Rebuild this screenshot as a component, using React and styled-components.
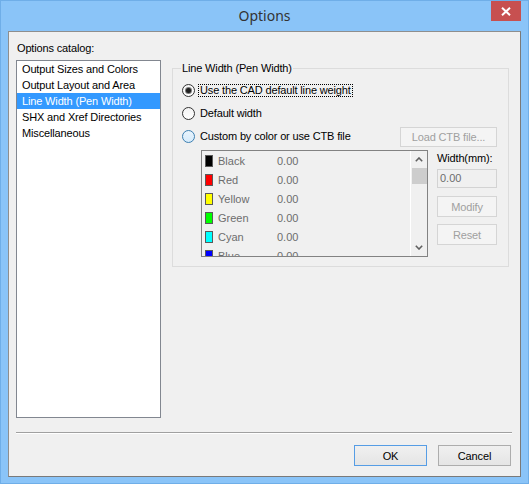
import React from "react";
import styled, { createGlobalStyle } from "styled-components";

const Global = createGlobalStyle`
  html, body { margin: 0; padding: 0; background: #ffffff; }
  body { font-family: "Liberation Sans", Arial, sans-serif; }
  * { box-sizing: border-box; }
`;

const Window = styled.div`
  width: 529px;
  height: 484px;
  background: #8ac4f8;
  border: 1px solid #6faee8;
  padding: 0 7px 6px 7px;
  display: flex;
  flex-direction: column;
`;

const TitleBar = styled.div`
  height: 30px;
  display: grid;
  grid-template-columns: 1fr auto 1fr;
  align-items: center;
`;

const Title = styled.div`
  grid-column: 2;
  font-family: "Noto Sans", "Open Sans", sans-serif;
  font-size: 14px;
  color: #333333;
  padding-bottom: 1px;
`;

const Close = styled.div`
  grid-column: 3;
  justify-self: end;
  align-self: start;
  width: 30px;
  height: 20px;
  background: #c75050;
  display: flex;
  align-items: center;
  justify-content: center;
`;

const Client = styled.div`
  flex: 1;
  background: #f0f0f0;
  border: 1px solid #7a7a7a;
  border-left-color: #8e8e8e;
  border-top-color: #8e8e8e;
  padding: 0 8px 0 7px;
  display: flex;
  flex-direction: column;
  font-size: 11px;
  color: #000;
  letter-spacing: -0.15px;
`;

const TopSection = styled.div`
  display: flex;
  align-items: flex-start;
`;

const LeftColumn = styled.div`
  width: 145px;
  display: flex;
  flex-direction: column;
`;

const Label = styled.div`
  line-height: 13px;
  padding-top: 10px;
  margin-bottom: 5px;
  padding-left: 1px;
`;

const ListBox = styled.div`
  height: 358px;
  background: #ffffff;
  border: 1px solid #828790;
  display: flex;
  flex-direction: column;
`;

const ListItem = styled.div`
  height: 16px;
  line-height: 16px;
  padding-left: 5px;
  white-space: nowrap;
  background: ${(p) => (p.$selected ? "#3399ff" : "transparent")};
  color: ${(p) => (p.$selected ? "#ffffff" : "#000000")};
`;

const RightColumn = styled.div`
  margin-left: 11px;
  padding-top: 30px;
  width: 337px;
`;

const GroupBox = styled.fieldset`
  margin: 0;
  min-width: 0;
  border: 1px solid #dcdcdc;
  padding: 4px 11px 9px 9px;
  display: flex;
  flex-direction: column;
`;

const Legend = styled.legend`
  padding: 0 1px;
  margin-left: -1px;
  line-height: 13px;
  font-size: 11px;
`;

const RadioRow = styled.div`
  height: 23px;
  display: flex;
  align-items: center;
  justify-content: space-between;
`;

const RadioWrap = styled.div`
  display: flex;
  align-items: center;
`;

const RadioCircle = styled.div`
  width: 13px;
  height: 13px;
  border-radius: 50%;
  border: 1px solid ${(p) => (p.$hover ? "#3c7fb1" : "#333333")};
  background: ${(p) =>
    p.$hover
      ? "linear-gradient(#e8f4fd, #d6ebfb)"
      : "linear-gradient(#f4f4f4, #ffffff)"};
  display: flex;
  align-items: center;
  justify-content: center;
`;

const RadioDot = styled.div`
  width: 5px;
  height: 5px;
  border-radius: 50%;
  background: #1f1f1f;
  box-shadow: 0 0 0 1px #7a7a7a;
`;

const RadioLabel = styled.span`
  margin-left: 3px;
  padding: 0 1px;
  line-height: 11px;
  border: 1px dotted ${(p) => (p.$focus ? "#000000" : "transparent")};
  white-space: nowrap;
`;

const Button = styled.div`
  width: ${(p) => p.$w}px;
  height: ${(p) => p.$h || 21}px;
  display: flex;
  align-items: center;
  justify-content: center;
  border: 1px solid
    ${(p) => (p.$disabled ? "#d5d5d5" : p.$default ? "#569de5" : "#adadad")};
  background: ${(p) =>
    p.$disabled ? "#f4f4f4" : "linear-gradient(#f0f0f0, #e5e5e5)"};
  color: ${(p) => (p.$disabled ? "#a0a0a0" : "#000000")};
  white-space: nowrap;
`;

const ColorArea = styled.div`
  margin-top: 2px;
  padding-left: 19px;
  display: flex;
  align-items: flex-start;
`;

const ColorList = styled.div`
  width: 227px;
  height: 107px;
  border: 1px solid #828282;
  display: flex;
  overflow: hidden;
`;

const ColorRows = styled.div`
  flex: 1;
  display: flex;
  flex-direction: column;
`;

const ColorRow = styled.div`
  height: 19px;
  flex-shrink: 0;
  display: flex;
  align-items: center;
  padding-left: 3px;
  color: #6d6d6d;
  font-size: 11px;
  letter-spacing: 0;
`;

const Swatch = styled.div`
  width: 8px;
  height: 12px;
  border: 1px solid #5a5a5a;
  background: ${(p) => p.$color};
`;

const ColorName = styled.span`
  width: 59px;
  margin-left: 5px;
`;

const ScrollBar = styled.div`
  width: 17px;
  border-left: 1px solid #ffffff;
  display: flex;
  flex-direction: column;
  align-items: center;
`;

const ScrollBtn = styled.div`
  height: 17px;
  width: 16px;
  display: flex;
  align-items: center;
  justify-content: center;
`;

const Thumb = styled.div`
  width: 15px;
  height: 16px;
  background: #cdcdcd;
`;

const Spacer = styled.div`
  flex: 1;
`;

const Controls = styled.div`
  width: 60px;
  margin-left: 9px;
  display: flex;
  flex-direction: column;
`;

const SmallLabel = styled.div`
  line-height: 14px;
  margin-top: 1px;
  white-space: nowrap;
`;

const Input = styled.div`
  margin-top: 4px;
  height: 19px;
  border: 1px solid #d3d3d3;
  background: #f0f0f0;
  color: #6d6d6d;
  padding-left: 2px;
  line-height: 17px;
  letter-spacing: 0;
`;

const Separator = styled.div`
  margin-top: 14px;
  border-top: 1px solid #a0a0a0;
  border-bottom: 1px solid #ffffff;
`;

const ButtonRow = styled.div`
  margin-top: 11px;
  padding-right: 1px;
  display: flex;
  justify-content: flex-end;
  gap: 11px;
`;

const Chevron = ({ up }) => (
  <svg width="8" height="5" viewBox="0 0 8 5">
    <path
      d={up ? "M0.8 4.2 L4 1 L7.2 4.2" : "M0.8 0.8 L4 4 L7.2 0.8"}
      fill="none"
      stroke="#606060"
      strokeWidth="1.6"
    />
  </svg>
);

const catalog = [
  "Output Sizes and Colors",
  "Output Layout and Area",
  "Line Width (Pen Width)",
  "SHX and Xref Directories",
  "Miscellaneous",
];

const colors = [
  ["Black", "#000000"],
  ["Red", "#ff0000"],
  ["Yellow", "#ffff00"],
  ["Green", "#00ff00"],
  ["Cyan", "#00ffff"],
  ["Blue", "#0000ff"],
];

export default function App() {
  return (
    <>
      <Global />
      <Window>
        <TitleBar>
          <Title>Options</Title>
          <Close>
            <svg width="10" height="9" viewBox="0 0 10 9">
              <path d="M1 0.8 L9 8.2 M9 0.8 L1 8.2" stroke="#ffffff" strokeWidth="2" />
            </svg>
          </Close>
        </TitleBar>
        <Client>
          <TopSection>
            <LeftColumn>
              <Label>Options catalog:</Label>
              <ListBox>
                {catalog.map((c, i) => (
                  <ListItem key={c} $selected={i === 2}>
                    {c}
                  </ListItem>
                ))}
              </ListBox>
            </LeftColumn>
            <RightColumn>
              <GroupBox>
                <Legend>Line Width (Pen Width)</Legend>
                <RadioRow>
                  <RadioWrap>
                    <RadioCircle>
                      <RadioDot />
                    </RadioCircle>
                    <RadioLabel $focus>Use the CAD default line weight</RadioLabel>
                  </RadioWrap>
                </RadioRow>
                <RadioRow>
                  <RadioWrap>
                    <RadioCircle />
                    <RadioLabel>Default width</RadioLabel>
                  </RadioWrap>
                </RadioRow>
                <RadioRow>
                  <RadioWrap>
                    <RadioCircle $hover />
                    <RadioLabel>Custom by color or use CTB file</RadioLabel>
                  </RadioWrap>
                  <Button $w={97} $h={20} $disabled>
                    Load CTB file...
                  </Button>
                </RadioRow>
                <ColorArea>
                  <ColorList>
                    <ColorRows>
                      {colors.map(([name, col]) => (
                        <ColorRow key={name}>
                          <Swatch $color={col} />
                          <ColorName>{name}</ColorName>
                          <span>0.00</span>
                        </ColorRow>
                      ))}
                    </ColorRows>
                    <ScrollBar>
                      <ScrollBtn>
                        <Chevron up />
                      </ScrollBtn>
                      <Thumb />
                      <Spacer />
                      <ScrollBtn>
                        <Chevron />
                      </ScrollBtn>
                    </ScrollBar>
                  </ColorList>
                  <Controls>
                    <SmallLabel>Width(mm):</SmallLabel>
                    <Input>0.00</Input>
                    <Button $w={60} $disabled style={{ marginTop: 8 }}>
                      Modify
                    </Button>
                    <Button $w={60} $disabled style={{ marginTop: 7 }}>
                      Reset
                    </Button>
                  </Controls>
                </ColorArea>
              </GroupBox>
            </RightColumn>
          </TopSection>
          <Separator />
          <ButtonRow>
            <Button $w={73} $default>
              OK
            </Button>
            <Button $w={73}>Cancel</Button>
          </ButtonRow>
        </Client>
      </Window>
    </>
  );
}
